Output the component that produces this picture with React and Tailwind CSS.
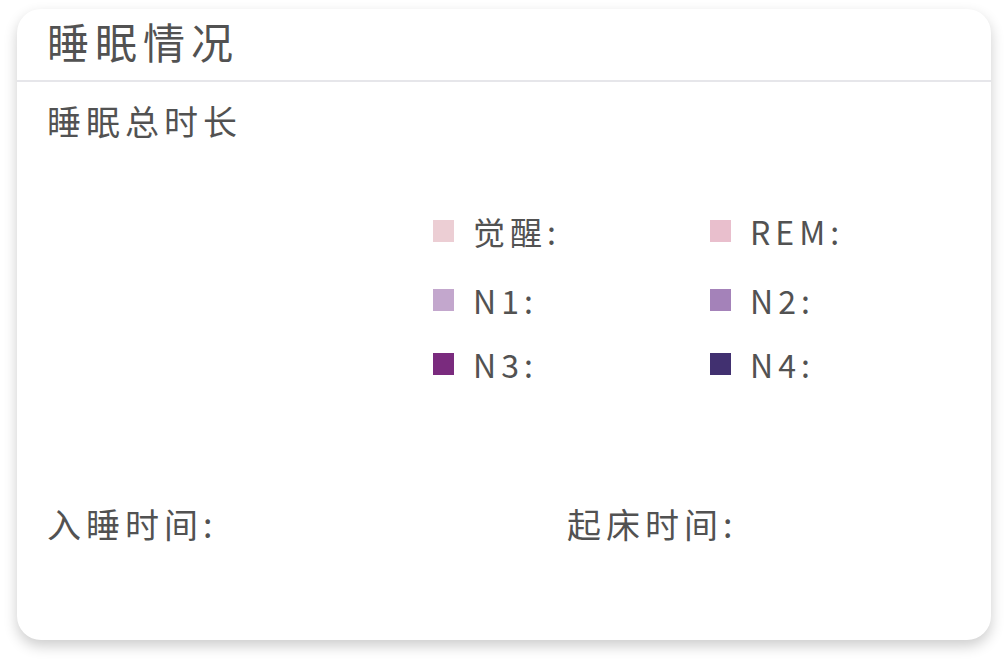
import React from 'react';

const stages = [
  { label: '觉醒', color: 'bg-[#ecced4]' },
  { label: 'REM', color: 'bg-[#e9bfcd]' },
  { label: 'N1', color: 'bg-[#c3a7cd]' },
  { label: 'N2', color: 'bg-[#a482b9]' },
  { label: 'N3', color: 'bg-[#7a2b7e]' },
  { label: 'N4', color: 'bg-[#413070]' },
];

const LegendItem = ({ label, color }) => (
  <div className="flex items-center">
    <span className={`w-[21px] h-[22px] ${color}`} />
    <span className="ml-[19px] text-[32px] leading-none tracking-[5px]">{label}:</span>
  </div>
);

const App = () => {
  return (
    <div className="min-h-screen bg-white pt-[9px] px-[17px] text-[#525252] font-['Noto_Sans_CJK_SC','Noto_Sans',sans-serif]">
      <div className="h-[631px] rounded-[24px] bg-white shadow-[0_6px_14px_rgba(0,0,0,0.2)]">
        <div className="h-[73px] border-b-2 border-[#e6e6ea] pl-[30px] pt-[11px]">
          <h1 className="text-[42px] leading-none tracking-[6px]">睡眠情况</h1>
        </div>

        <div className="px-[30px]">
          <h2 className="mt-[22px] text-[34px] leading-none tracking-[5px]">睡眠总时长</h2>

          <div className="ml-[386px] mt-[77px] grid grid-cols-[277px_277px]">
            <LegendItem {...stages[0]} />
            <LegendItem {...stages[1]} />
            <div className="mt-[37px]"><LegendItem {...stages[2]} /></div>
            <div className="mt-[37px]"><LegendItem {...stages[3]} /></div>
            <div className="mt-[32px]"><LegendItem {...stages[4]} /></div>
            <div className="mt-[32px]"><LegendItem {...stages[5]} /></div>
          </div>

          <div className="mt-[127px] grid grid-cols-[520px_1fr] text-[34px] leading-none tracking-[5px]">
            <span>入睡时间:</span>
            <span>起床时间:</span>
          </div>
        </div>
      </div>
    </div>
  );
};

export default App;
